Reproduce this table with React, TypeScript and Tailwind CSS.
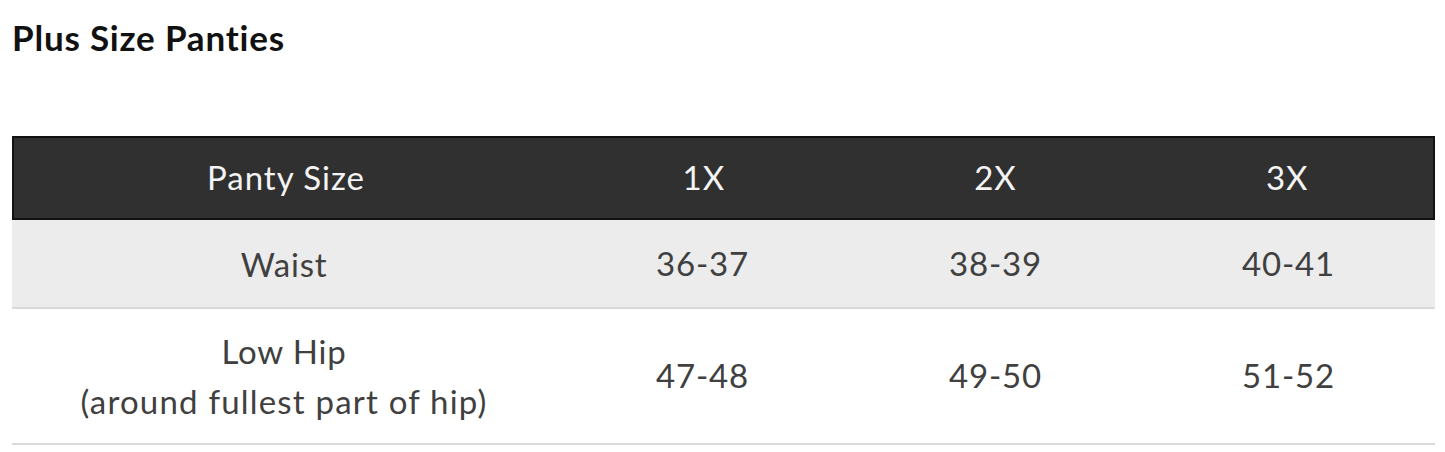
const sizes = ["1X", "2X", "3X"];

const rows = [
  { label: ["Waist"], values: ["36-37", "38-39", "40-41"], shaded: true },
  { label: ["Low Hip", "(around fullest part of hip)"], values: ["47-48", "49-50", "51-52"], shaded: false },
];

export default function App() {
  return (
    <div className="h-[452px] w-[1445px] bg-white pl-[12px] pr-[10px] pt-[15px] font-['Lato',sans-serif] text-[#404040]">
      <h1 className="text-[35px] font-bold leading-[44px] tracking-[0.8px] text-[#111]">Plus Size Panties</h1>
      <div className="mt-[77px]">
        <div className="grid h-[84px] grid-cols-[544px_1fr_1fr_1fr] items-center border-2 border-[#111] bg-[#303030] text-[33px] tracking-[1px] text-[#f4f4f4]">
          <div className="text-center">Panty Size</div>
          {sizes.map((s) => (
            <div key={s} className="text-center">{s}</div>
          ))}
        </div>
        {rows.map((row) => (
          <div
            key={row.label[0]}
            className={`grid grid-cols-[544px_1fr_1fr_1fr] items-center border-b-2 border-[#d9d9d9] text-[33px] tracking-[0.8px] ${row.shaded ? "h-[89px] bg-[#ececec]" : "h-[136px] bg-white"}`}
          >
            <div className="text-center leading-[50px]">
              {row.label.map((l, i) => (
                <div key={l} className={i === 1 ? "tracking-[1.2px]" : ""}>{l}</div>
              ))}
            </div>
            {row.values.map((v) => (
              <div key={v} className="text-center">{v}</div>
            ))}
          </div>
        ))}
      </div>
    </div>
  );
}
